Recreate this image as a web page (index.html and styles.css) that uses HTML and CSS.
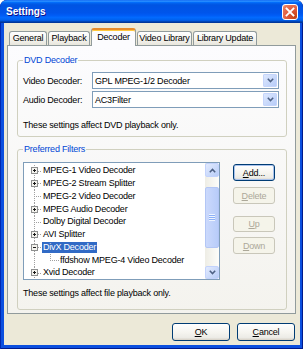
FILE: index.html
```html
<!DOCTYPE html>
<html lang="en">
<head>
    <meta charset="UTF-8">
    <meta name="viewport" content="width=device-width, initial-scale=1.0">
    <title>Settings</title>
    <link rel="stylesheet" href="styles.css">
</head>
<body>
    <div class="window">
        <div class="titlebar">
            <span class="title">Settings</span>
            <span class="close">
                <svg width="14" height="14" viewBox="0 0 14 14"><path d="M3.5 3.5 L10.5 10.5 M10.5 3.5 L3.5 10.5" stroke="#fff" stroke-width="1.8" stroke-linecap="square"/></svg>
            </span>
        </div>

        <div class="client">
            <div class="tabs">
                <div class="tab w-general">General</div>
                <div class="tab w-playback">Playback</div>
                <div class="tab active w-decoder">Decoder</div>
                <div class="tab w-video">Video Library</div>
                <div class="tab w-update">Library Update</div>
            </div>

            <div class="panel">
                <fieldset class="group dvd">
                    <legend>DVD Decoder</legend>
                    <div class="field">
                        <label>Video Decoder:</label>
                        <div class="combo">
                            <span>GPL MPEG-1/2 Decoder</span>
                            <span class="drop"><svg width="7" height="5" viewBox="0 0 7 5"><path d="M0.8 0.8 L3.5 3.6 L6.2 0.8" fill="none" stroke="#4d6185" stroke-width="1.5"/></svg></span>
                        </div>
                    </div>
                    <div class="field">
                        <label>Audio Decoder:</label>
                        <div class="combo">
                            <span>AC3Filter</span>
                            <span class="drop"><svg width="7" height="5" viewBox="0 0 7 5"><path d="M0.8 0.8 L3.5 3.6 L6.2 0.8" fill="none" stroke="#4d6185" stroke-width="1.5"/></svg></span>
                        </div>
                    </div>
                    <p class="note">These settings affect DVD playback only.</p>
                </fieldset>

                <fieldset class="group filters">
                    <legend>Preferred Filters</legend>
                    <div class="filter-row">
                        <div class="listbox">
                            <ul class="tree">
                                <li class="node"><span class="branch"><svg class="expander" width="7" height="7" viewBox="0 0 7 7"><rect x="0.5" y="0.5" width="6" height="6" fill="#f4f3ee" stroke="#8e8f8f"/><path d="M2 3.5 H5 M3.5 2 V5" stroke="#1a1a1a"/></svg></span><span class="label">MPEG-1 Video Decoder</span></li>
                                <li class="node"><span class="branch"><svg class="expander" width="7" height="7" viewBox="0 0 7 7"><rect x="0.5" y="0.5" width="6" height="6" fill="#f4f3ee" stroke="#8e8f8f"/><path d="M2 3.5 H5 M3.5 2 V5" stroke="#1a1a1a"/></svg></span><span class="label">MPEG-2 Stream Splitter</span></li>
                                <li class="node"><span class="branch"></span><span class="label">MPEG-2 Video Decoder</span></li>
                                <li class="node"><span class="branch"><svg class="expander" width="7" height="7" viewBox="0 0 7 7"><rect x="0.5" y="0.5" width="6" height="6" fill="#f4f3ee" stroke="#8e8f8f"/><path d="M2 3.5 H5 M3.5 2 V5" stroke="#1a1a1a"/></svg></span><span class="label">MPEG Audio Decoder</span></li>
                                <li class="node"><span class="branch"></span><span class="label">Dolby Digital Decoder</span></li>
                                <li class="node"><span class="branch"><svg class="expander" width="7" height="7" viewBox="0 0 7 7"><rect x="0.5" y="0.5" width="6" height="6" fill="#f4f3ee" stroke="#8e8f8f"/><path d="M2 3.5 H5 M3.5 2 V5" stroke="#1a1a1a"/></svg></span><span class="label">AVI Splitter</span></li>
                                <li class="node"><span class="branch"><svg class="expander" width="7" height="7" viewBox="0 0 7 7"><rect x="0.5" y="0.5" width="6" height="6" fill="#f4f3ee" stroke="#8e8f8f"/><path d="M2 3.5 H5" stroke="#1a1a1a"/></svg></span><span class="label selected">DivX Decoder</span></li>
                                <li class="node"><span class="branch pass"></span><span class="branch sub"></span><span class="label">ffdshow MPEG-4 Video Decoder</span></li>
                                <li class="node"><span class="branch"><svg class="expander" width="7" height="7" viewBox="0 0 7 7"><rect x="0.5" y="0.5" width="6" height="6" fill="#f4f3ee" stroke="#8e8f8f"/><path d="M2 3.5 H5 M3.5 2 V5" stroke="#1a1a1a"/></svg></span><span class="label">Xvid Decoder</span></li>
                            </ul>
                            <div class="scrollbar">
                                <span class="sb-btn"><svg width="7" height="5" viewBox="0 0 7 5"><path d="M0.8 4.2 L3.5 1.4 L6.2 4.2" fill="none" stroke="#4d6185" stroke-width="1.5"/></svg></span>
                                <span class="thumb"><span class="grip"></span></span>
                                <span class="sb-btn down"><svg width="7" height="5" viewBox="0 0 7 5"><path d="M0.8 0.8 L3.5 3.6 L6.2 0.8" fill="none" stroke="#4d6185" stroke-width="1.5"/></svg></span>
                            </div>
                        </div>
                        <div class="side-buttons">
                            <button class="btn default btn-add"><u>A</u>dd...</button>
                            <button class="btn btn-delete" disabled><u>D</u>elete</button>
                            <button class="btn btn-up" disabled><u>U</u>p</button>
                            <button class="btn btn-down" disabled><u>D</u>own</button>
                        </div>
                    </div>
                    <p class="note">These settings affect file playback only.</p>
                </fieldset>
            </div>

            <div class="dialog-buttons">
                <button class="btn wide"><u>O</u>K</button>
                <button class="btn wide"><u>C</u>ancel</button>
            </div>
        </div>
    </div>
</body>
</html>
```

FILE: styles.css
```css
* {
    padding: 0;
    margin: 0;
    box-sizing: border-box;
}
body {
    width: 303px;
    height: 349px;
    background: #fff;
    font-family: "Liberation Sans", Arial, sans-serif;
    font-size: 9px;
    letter-spacing: -0.2px;
    color: #000;
}
.window {
    height: 349px;
    display: flex;
    flex-direction: column;
    background: #0b4fdf;
    border-radius: 7px 7px 0 0;
    box-shadow: inset 1px 0 #0028b0, inset -1px 0 #001a8c, inset 0 -1px #001a8c;
    overflow: hidden;
}

/* title bar */
.titlebar {
    height: 23px;
    display: flex;
    align-items: flex-start;
    padding: 0 5px 0 6px;
    background: linear-gradient(to bottom, #0058ee 0%, #3593ff 4%, #288eff 6%, #127dff 8%, #036ffc 10%, #0262ee 14%, #0057e5 20%, #0054e3 24%, #0055eb 56%, #005bf5 66%, #026afe 76%, #0062ef 86%, #0052d6 92%, #0040ab 94%, #003092 100%);
    border-radius: 7px 7px 0 0;
}
.title {
    margin-top: 6px;
    font-size: 10px;
    font-weight: bold;
    letter-spacing: 0;
    line-height: 12px;
    color: #fff;
    text-shadow: 1px 1px #0f1089;
}
.close {
    margin-left: auto;
    margin-top: 4px;
    width: 16px;
    height: 16px;
    display: flex;
    align-items: center;
    justify-content: center;
    border: 1px solid #fff;
    border-radius: 3px;
    background: radial-gradient(circle at 85% 85%, #c24212 0%, #e0583a 45%, #e87a5c 85%, #f3b49d 100%);
}

/* client area */
.client {
    flex: 1;
    margin: 0 3px 4px 4px;
    background: #ece9d8;
    display: flex;
    flex-direction: column;
}
.tabs {
    height: 22px;
    display: flex;
    align-items: flex-end;
    gap: 1px;
    padding-left: 5px;
}
.tab {
    height: 14px;
    line-height: 13px;
    text-align: center;
    border: 1px solid #919b9c;
    border-bottom: none;
    border-radius: 3px 3px 0 0;
    background: linear-gradient(#ffffff, #f3f2ed 60%, #e8e6dc);
}
.tab.active {
    height: 18px;
    line-height: 14px;
    margin-bottom: -1px;
    position: relative;
    z-index: 1;
    border-top: 2px solid #e68b2c;
    box-shadow: inset 0 1px #ffc83c;
    background: #fcfcfe;
}
.w-general { width: 38px; }
.w-playback { width: 42px; }
.w-decoder { width: 45px; }
.w-video { width: 55px; }
.w-update { width: 64px; }

.panel {
    height: 269px;
    margin: 0 4px 0 3px;
    border: 1px solid #919b9c;
    background: linear-gradient(#fcfcfe, #f4f3ee);
    display: flex;
    flex-direction: column;
}

/* group boxes */
.group {
    border: 1px solid #d0d0bf;
    border-radius: 3px;
    margin: 0 8px 0 9px;
    min-width: 0;
}
.group legend {
    padding: 0 1px;
    line-height: 11px;
    color: #0046d5;
}
.dvd {
    margin-top: 9px;
    padding: 6px 7px 5px 5px;
}
.filters {
    margin-top: 7px;
    padding: 7px 11px 10px 5px;
}
.note {
    line-height: 11px;
    margin-top: 12px;
}
.filters .note {
    margin-top: 8px;
}

/* combo boxes */
.field {
    height: 17px;
    display: flex;
    align-items: center;
}
.field + .field {
    margin-top: 2px;
}
.field label {
    width: 69px;
}
.combo {
    flex: 1;
    height: 17px;
    display: flex;
    align-items: center;
    padding-left: 2px;
    border: 1px solid #7f9db9;
    background: #fff;
}
.drop {
    margin-left: auto;
    align-self: stretch;
    width: 14px;
    margin: 1px 1px 1px auto;
    display: flex;
    align-items: center;
    justify-content: center;
    border: 1px solid #c5d5fb;
    border-radius: 1px;
    background: linear-gradient(135deg, #dde8fe, #b7ccf8);
}

/* tree list */
.filter-row {
    display: flex;
    align-items: flex-start;
}
.listbox {
    width: 197px;
    height: 118px;
    border: 1px solid #7f9db9;
    background: #fff;
    display: flex;
}
.tree {
    flex: 1;
    list-style: none;
    overflow: hidden;
    padding-top: 1.6px;
}
.node {
    height: 12.75px;
    display: flex;
    align-items: center;
    white-space: nowrap;
}
.branch {
    width: 18px;
    align-self: stretch;
    display: flex;
    align-items: center;
    flex-shrink: 0;
    background-image: repeating-linear-gradient(to bottom, #a0a0a0 0 1px, transparent 1px 2px), repeating-linear-gradient(to right, #a0a0a0 0 1px, transparent 1px 2px);
    background-size: 1px 100%, 8px 1px;
    background-position: 10px 0, 10px 6px;
    background-repeat: no-repeat;
}
.branch.pass {
    background-size: 1px 100%, 0 0;
}
.branch.sub {
    width: 17px;
    background-size: 1px 7px, 9px 1px;
    background-position: 8px 0, 8px 6px;
}
.expander {
    margin-left: 7px;
}
.label {
    padding: 0 1px;
    line-height: 11px;
}
.label.selected {
    background: #316ac5;
    color: #fff;
}

/* scrollbar */
.scrollbar {
    width: 14px;
    display: flex;
    flex-direction: column;
    background: linear-gradient(to right, #eeede5, #fdfdfa);
}
.sb-btn {
    height: 14px;
    display: flex;
    align-items: center;
    justify-content: center;
    border: 1px solid #c3d3fd;
    border-radius: 2px;
    background: linear-gradient(135deg, #e3ebfe, #b8cdf8);
}
.sb-btn.down {
    margin-top: auto;
    height: 13px;
}
.thumb {
    margin-top: 10px;
    height: 61px;
    display: flex;
    align-items: center;
    justify-content: center;
    border: 1px solid #b3c6f5;
    border-radius: 2px;
    background: linear-gradient(to right, #cbd9fc, #b8ccf9);
}
.grip {
    width: 6px;
    height: 7px;
    background: repeating-linear-gradient(to bottom, #eef4fe 0 1px, #8cb0f8 1px 2px);
}

/* buttons */
.btn {
    font-family: inherit;
    font-size: 9px;
    letter-spacing: -0.2px;
    color: #000;
    height: 17px;
    border: 1px solid #003c74;
    border-radius: 3px;
    background: linear-gradient(#ffffff 0%, #f5f4ef 55%, #ecebe6 85%, #d6d0c5 100%);
}
.btn.default {
    box-shadow: inset 0 0 0 1px #a9c2ec;
}
.btn:disabled {
    color: #aca899;
    border-color: #c9c7ba;
    background: #f5f4ea;
}
.side-buttons {
    width: 42px;
    margin-left: 13px;
    margin-top: 2px;
    display: flex;
    flex-direction: column;
}
.btn-delete { margin-top: 6px; }
.btn-up { margin-top: 12px; height: 16px; }
.btn-down { margin-top: 5px; }

.dialog-buttons {
    margin-top: 9px;
    display: flex;
    justify-content: flex-end;
    gap: 7px;
    padding-right: 5px;
}
.btn.wide {
    width: 58px;
    height: 18px;
}
```
